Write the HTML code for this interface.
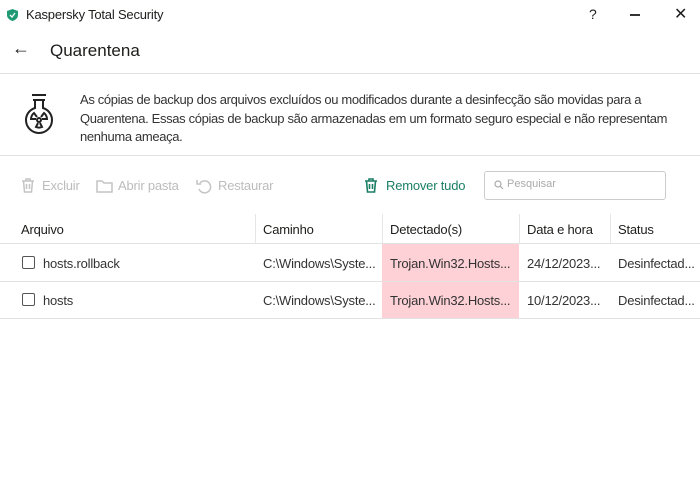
<!DOCTYPE html><html><head><style>
body{margin:0;width:700px;height:487px;background:#fff;font-family:"Liberation Sans",sans-serif;color:#1d1d1b;position:relative;overflow:hidden}
.a{position:absolute;white-space:nowrap}
.hl{position:absolute;left:0;right:0;height:1px;background:#e2e2e2}
.vl{position:absolute;width:1px;background:#e6e6e6}
.cb{position:absolute;width:11px;height:11px;border:1.5px solid #555;border-radius:2px}
.t{font-size:13px;color:#333;letter-spacing:-0.2px}
</style></head><body>
<svg class="a" style="left:7px;top:9px" width="11" height="12" viewBox="0 0 11 12"><path d="M5.5 0L11 2v4c0 3-2.5 5-5.5 6C2.5 11 0 9 0 6V2z" fill="#1f9a74"/><path d="M3 6l2 2 3-4" stroke="#fff" stroke-width="1.3" fill="none"/></svg>
<div class="a" style="left:26px;top:7px;font-size:13px;letter-spacing:-0.2px">Kaspersky Total Security</div>
<div class="a" style="left:589px;top:6px;font-size:14px">?</div>
<div class="a" style="left:630px;top:14px;width:10px;height:1.5px;background:#333"></div>
<div class="a" style="left:674px;top:4px;font-size:16px">✕</div>
<div class="a" style="left:12px;top:38px;font-size:18px">←</div>
<div class="a" style="left:50px;top:41px;font-size:17px">Quarentena</div>
<div class="hl" style="top:73px"></div>
<svg class="a" style="left:24px;top:92px" width="30" height="44" viewBox="0 0 30 44" fill="none" stroke="#222" stroke-width="2"><path d="M8 3h14M9 8h12M11 8v8C5 18 2 23 2 28a13 13 0 0 0 26 0c0-5-3-10-9-12V8"/><circle cx="15" cy="28" r="2"/><path d="M13 25l-3-4a8 8 0 0 0-3 6h5M17 25l3-4a8 8 0 0 1 3 6h-5M14 31l-2 4a8 8 0 0 0 6 0l-2-4"/></svg>
<div class="a" style="left:80px;top:91px;font-size:13px;line-height:18.5px;color:#333;letter-spacing:-0.35px">As cópias de backup dos arquivos excluídos ou modificados durante a desinfecção são movidas para a<br>Quarentena. Essas cópias de backup são armazenadas em um formato seguro especial e não representam<br>nenhuma ameaça.</div>
<div class="hl" style="top:155px"></div>
<svg class="a" style="left:21px;top:178px" width="260" height="16" fill="none" stroke="#c4c4c4" stroke-width="1.5"><path d="M1 3h12M5 3V1h4v2M2.5 3l1 11h7l1-11M5.5 6v5M8.5 6v5"/><path d="M76 3h5l2 2h8v9H76z"/><path d="M179 5a6 6 0 1 1-1 6M176 2v4h4"/></svg>
<div class="a" style="left:42px;top:178px;font-size:13px;color:#bcbcbc;letter-spacing:-0.2px">Excluir</div>
<div class="a" style="left:118px;top:178px;font-size:13px;color:#bcbcbc;letter-spacing:-0.2px">Abrir pasta</div>
<div class="a" style="left:218px;top:178px;font-size:13px;color:#bcbcbc;letter-spacing:-0.2px">Restaurar</div>
<svg class="a" style="left:364px;top:178px" width="14" height="15" viewBox="0 0 14 15" fill="none" stroke="#1a7f65" stroke-width="1.6"><path d="M1 3h12M5 3V1h4v2M2.5 3l1 11h7l1-11M5.5 6v5M8.5 6v5"/></svg>
<div class="a" style="left:386px;top:178px;font-size:13px;color:#1a7f65;letter-spacing:-0.2px">Remover tudo</div>
<div class="a" style="left:484px;top:171px;width:180px;height:27px;border:1px solid #ccc;border-radius:3px"></div>
<svg class="a" style="left:494px;top:180px" width="10" height="10" fill="none" stroke="#aaa" stroke-width="1.2"><circle cx="4" cy="4" r="3"/><path d="M6 6l3 3"/></svg>
<div class="a" style="left:507px;top:178px;font-size:11px;color:#aaa">Pesquisar</div>
<div class="vl" style="left:255px;top:214px;height:29px"></div>
<div class="vl" style="left:382px;top:214px;height:29px"></div>
<div class="vl" style="left:519px;top:214px;height:29px"></div>
<div class="vl" style="left:610px;top:214px;height:29px"></div>
<div class="a" style="left:382px;top:244px;width:137px;height:74px;background:#fdd1d6"></div>
<div class="hl" style="top:243px"></div>
<div class="hl" style="top:281px"></div>
<div class="hl" style="top:318px"></div>
<div class="a t" style="left:21px;top:222px;color:#1d1d1b">Arquivo</div>
<div class="a t" style="left:263px;top:222px;color:#1d1d1b">Caminho</div>
<div class="a t" style="left:390px;top:222px;color:#1d1d1b">Detectado(s)</div>
<div class="a t" style="left:527px;top:222px;color:#1d1d1b">Data e hora</div>
<div class="a t" style="left:618px;top:222px;color:#1d1d1b">Status</div>
<div class="cb" style="left:22px;top:256px"></div>
<div class="a t" style="left:43px;top:256px">hosts.rollback</div>
<div class="a t" style="left:263px;top:256px">C:\Windows\Syste...</div>
<div class="a t" style="left:390px;top:256px">Trojan.Win32.Hosts...</div>
<div class="a t" style="left:527px;top:256px">24/12/2023...</div>
<div class="a t" style="left:618px;top:256px">Desinfectad...</div>
<div class="cb" style="left:22px;top:293px"></div>
<div class="a t" style="left:43px;top:293px">hosts</div>
<div class="a t" style="left:263px;top:293px">C:\Windows\Syste...</div>
<div class="a t" style="left:390px;top:293px">Trojan.Win32.Hosts...</div>
<div class="a t" style="left:527px;top:293px">10/12/2023...</div>
<div class="a t" style="left:618px;top:293px">Desinfectad...</div>
</body></html>
